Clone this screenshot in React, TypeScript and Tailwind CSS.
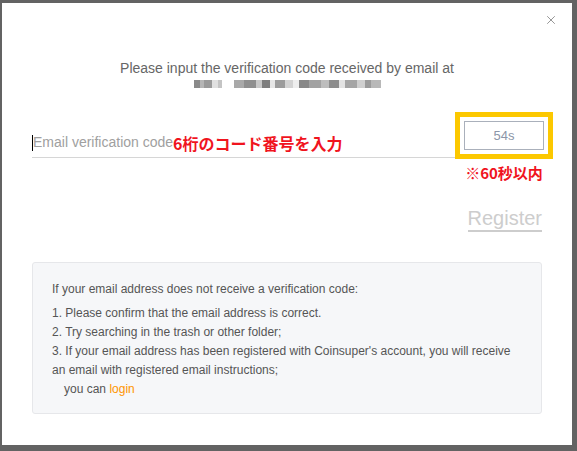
import { X } from 'lucide-react'

const chunks: [number, string][] = [
  [6, '#8a8a8a'], [4, '#b5b5b5'], [8, '#9a9a9a'], [6, '#e0e0e0'], [4, '#c4c4c4'], [12, '#ffffff'],
  [10, '#a9a9a9'], [12, '#8f8f8f'], [6, '#c8c8c8'], [8, '#7e7e7e'], [5, '#e6e6e6'], [10, '#9c9c9c'],
  [8, '#d3d3d3'], [6, '#eeeeee'], [10, '#888888'], [12, '#a2a2a2'], [8, '#bdbdbd'], [10, '#8d8d8d'],
  [6, '#e3e3e3'], [12, '#a5a5a5'], [8, '#cfcfcf'], [6, '#9b9b9b'], [10, '#b8b8b8']
]

export default function App() {
  return (
    <div className="w-[577px] h-[451px] bg-[#636363] pt-[3px] pl-[2px] font-['Liberation_Sans',Arial,sans-serif]">
      <div className="w-[570px] h-[442px] bg-white relative">
        <button className="absolute right-[14px] top-[10px] text-[#888]">
          <X size={14} strokeWidth={1.5} />
        </button>

        <div className="pt-[56px] text-center text-[14px] leading-[18px] text-[#666]">
          <p>Please input the verification code received by email at</p>
          <div className="mt-[2px] flex justify-center h-[10px] items-center">
            {chunks.map(([w, c], i) => (
              <span key={i} className="h-[8px]" style={{ width: w, background: c }} />
            ))}
          </div>
        </div>

        <div className="mt-[23px] flex pl-[30px] pr-[19px]">
          <div className="flex-1 pt-[16px]">
            <div className="flex items-center h-[30px] border-b border-[#d6d6d6] mr-[-2px]">
              <span className="w-px h-[16px] bg-black" />
              <span className="text-[14px] text-[#a0a0a0]">Email verification code</span>
              <span className="text-[16px] font-bold text-[#f0141e] font-['Noto_Sans_CJK_JP',sans-serif] leading-none">
                6桁のコード番号を入力
              </span>
            </div>
          </div>
          <div className="w-[98px] flex flex-col items-center">
            <div className="border-[5px] border-[#fcc800] p-[4px] w-[98px]">
              <div className="h-[29px] border border-[#aab0bb] flex items-center justify-center text-[13px] text-[#8c96a8]">
                54s
              </div>
            </div>
            <span className="mt-[4px] text-[15px] font-bold text-[#f0141e] font-['Noto_Sans_CJK_JP',sans-serif] leading-[20px]">
              ※60秒以内
            </span>
          </div>
        </div>

        <div className="flex justify-end pr-[30px] mt-[23px]">
          <span className="text-[20px] text-[#cdcdcd] border-b-2 border-[#cdcdcd] leading-[24px]">Register</span>
        </div>

        <div className="mx-[30px] mt-[30px] h-[152px] bg-[#f6f7f9] border border-[#e6e7ea] rounded-[3px] px-[19px] pt-[17px] text-[12px] text-[#555] leading-[19px]">
          <p>If your email address does not receive a verification code:</p>
          <p className="mt-[5px]">1. Please confirm that the email address is correct.</p>
          <p>2. Try searching in the trash or other folder;</p>
          <p>3. If your email address has been registered with Coinsuper's account, you will receive</p>
          <p>an email with registered email instructions;</p>
          <p className="pl-[12px]">
            you can <span className="text-[#ff9500]">login</span>
          </p>
        </div>
      </div>
    </div>
  )
}
